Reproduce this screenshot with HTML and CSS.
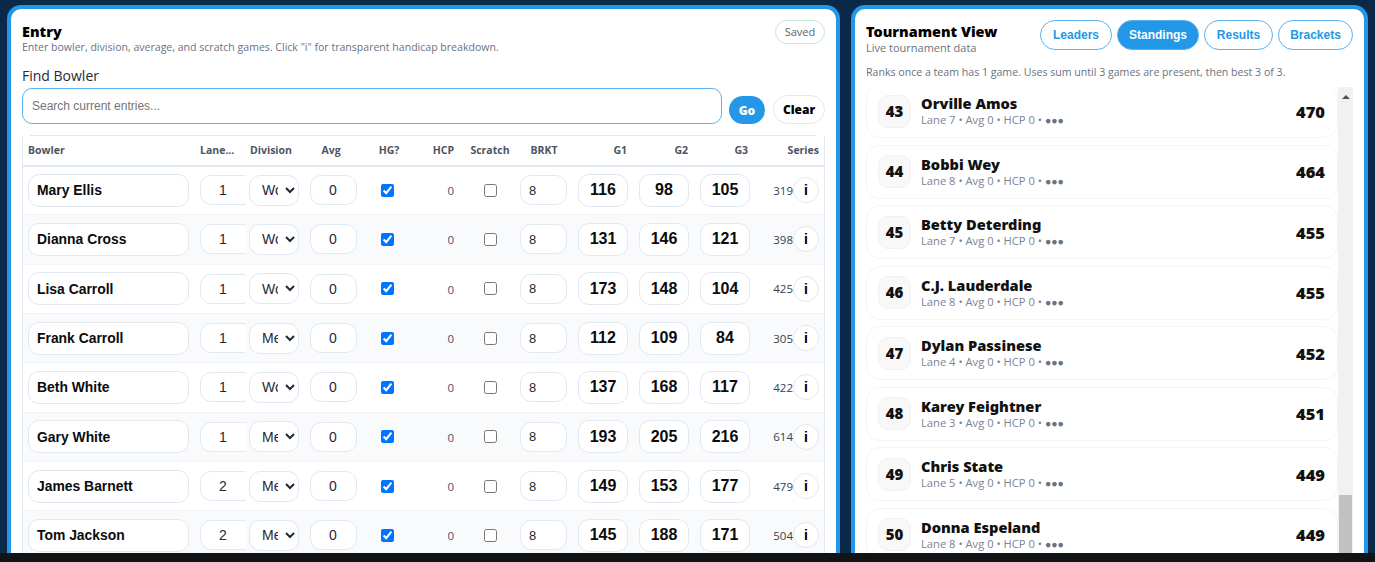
FILE: index.html
```html
<!DOCTYPE html>
<html lang="en">
<head>
<meta charset="utf-8">
<title>Tournament</title>
<link rel="stylesheet" href="styles.css">
</head>
<body>
<div class="app">
  <section class="panel entry">
    <div class="head">
      <div>
        <h2 class="title">Entry</h2>
        <p class="sub lead">Enter bowler, division, average, and scratch games. Click "i" for transparent handicap breakdown.</p>
      </div>
      <span class="saved">Saved</span>
    </div>
    <label class="find-label" for="q">Find Bowler</label>
    <div class="find">
      <input id="q" class="search" placeholder="Search current entries...">
      <button class="go">Go</button>
      <button class="clear">Clear</button>
    </div>
    <div class="rule"></div>
    <div class="table-wrap">
      <table>
        <colgroup>
          <col class="c-name"><col class="c-lane"><col class="c-div"><col class="c-avg"><col class="c-hg"><col class="c-hcp"><col class="c-scr"><col class="c-brkt"><col class="c-g"><col class="c-g"><col class="c-g3"><col class="c-ser">
        </colgroup>
        <thead>
          <tr>
            <th class="l">Bowler</th><th class="lane-h l">Lane...</th><th class="div-h l">Division</th><th class="avg-h">Avg</th><th class="hg-h">HG?</th><th class="r hcp">HCP</th><th>Scratch</th><th>BRKT</th><th class="r g-h">G1</th><th class="r g-h">G2</th><th class="r g-h">G3</th><th class="r ser-h">Series</th>
          </tr>
        </thead>
        <tbody>
          <tr>
            <td><input class="f name" value="Mary Ellis"></td>
            <td class="lane"><input class="f num" value="1"></td>
            <td class="dv"><select class="sel"><option>Women</option><option>Men</option></select></td>
            <td><input class="f num avg" value="0"></td>
            <td class="c"><input type="checkbox" class="chk" checked></td>
            <td class="r hcp val">0</td>
            <td class="c"><input type="checkbox" class="chk"></td>
            <td><input class="f brkt" value="8"></td>
            <td><input class="f game" value="116"></td>
            <td><input class="f game" value="98"></td>
            <td><input class="f game" value="105"></td>
            <td class="sc"><div class="ser"><span>319</span><button class="info">i</button></div></td>
          </tr>
          <tr>
            <td><input class="f name" value="Dianna Cross"></td>
            <td class="lane"><input class="f num" value="1"></td>
            <td class="dv"><select class="sel"><option>Women</option><option>Men</option></select></td>
            <td><input class="f num avg" value="0"></td>
            <td class="c"><input type="checkbox" class="chk" checked></td>
            <td class="r hcp val">0</td>
            <td class="c"><input type="checkbox" class="chk"></td>
            <td><input class="f brkt" value="8"></td>
            <td><input class="f game" value="131"></td>
            <td><input class="f game" value="146"></td>
            <td><input class="f game" value="121"></td>
            <td class="sc"><div class="ser"><span>398</span><button class="info">i</button></div></td>
          </tr>
          <tr>
            <td><input class="f name" value="Lisa Carroll"></td>
            <td class="lane"><input class="f num" value="1"></td>
            <td class="dv"><select class="sel"><option>Women</option><option>Men</option></select></td>
            <td><input class="f num avg" value="0"></td>
            <td class="c"><input type="checkbox" class="chk" checked></td>
            <td class="r hcp val">0</td>
            <td class="c"><input type="checkbox" class="chk"></td>
            <td><input class="f brkt" value="8"></td>
            <td><input class="f game" value="173"></td>
            <td><input class="f game" value="148"></td>
            <td><input class="f game" value="104"></td>
            <td class="sc"><div class="ser"><span>425</span><button class="info">i</button></div></td>
          </tr>
          <tr>
            <td><input class="f name" value="Frank Carroll"></td>
            <td class="lane"><input class="f num" value="1"></td>
            <td class="dv"><select class="sel"><option>Men</option><option>Women</option></select></td>
            <td><input class="f num avg" value="0"></td>
            <td class="c"><input type="checkbox" class="chk" checked></td>
            <td class="r hcp val">0</td>
            <td class="c"><input type="checkbox" class="chk"></td>
            <td><input class="f brkt" value="8"></td>
            <td><input class="f game" value="112"></td>
            <td><input class="f game" value="109"></td>
            <td><input class="f game" value="84"></td>
            <td class="sc"><div class="ser"><span>305</span><button class="info">i</button></div></td>
          </tr>
          <tr>
            <td><input class="f name" value="Beth White"></td>
            <td class="lane"><input class="f num" value="1"></td>
            <td class="dv"><select class="sel"><option>Women</option><option>Men</option></select></td>
            <td><input class="f num avg" value="0"></td>
            <td class="c"><input type="checkbox" class="chk" checked></td>
            <td class="r hcp val">0</td>
            <td class="c"><input type="checkbox" class="chk"></td>
            <td><input class="f brkt" value="8"></td>
            <td><input class="f game" value="137"></td>
            <td><input class="f game" value="168"></td>
            <td><input class="f game" value="117"></td>
            <td class="sc"><div class="ser"><span>422</span><button class="info">i</button></div></td>
          </tr>
          <tr>
            <td><input class="f name" value="Gary White"></td>
            <td class="lane"><input class="f num" value="1"></td>
            <td class="dv"><select class="sel"><option>Men</option><option>Women</option></select></td>
            <td><input class="f num avg" value="0"></td>
            <td class="c"><input type="checkbox" class="chk" checked></td>
            <td class="r hcp val">0</td>
            <td class="c"><input type="checkbox" class="chk"></td>
            <td><input class="f brkt" value="8"></td>
            <td><input class="f game" value="193"></td>
            <td><input class="f game" value="205"></td>
            <td><input class="f game" value="216"></td>
            <td class="sc"><div class="ser"><span>614</span><button class="info">i</button></div></td>
          </tr>
          <tr>
            <td><input class="f name" value="James Barnett"></td>
            <td class="lane"><input class="f num" value="2"></td>
            <td class="dv"><select class="sel"><option>Men</option><option>Women</option></select></td>
            <td><input class="f num avg" value="0"></td>
            <td class="c"><input type="checkbox" class="chk" checked></td>
            <td class="r hcp val">0</td>
            <td class="c"><input type="checkbox" class="chk"></td>
            <td><input class="f brkt" value="8"></td>
            <td><input class="f game" value="149"></td>
            <td><input class="f game" value="153"></td>
            <td><input class="f game" value="177"></td>
            <td class="sc"><div class="ser"><span>479</span><button class="info">i</button></div></td>
          </tr>
          <tr>
            <td><input class="f name" value="Tom Jackson"></td>
            <td class="lane"><input class="f num" value="2"></td>
            <td class="dv"><select class="sel"><option>Men</option><option>Women</option></select></td>
            <td><input class="f num avg" value="0"></td>
            <td class="c"><input type="checkbox" class="chk" checked></td>
            <td class="r hcp val">0</td>
            <td class="c"><input type="checkbox" class="chk"></td>
            <td><input class="f brkt" value="8"></td>
            <td><input class="f game" value="145"></td>
            <td><input class="f game" value="188"></td>
            <td><input class="f game" value="171"></td>
            <td class="sc"><div class="ser"><span>504</span><button class="info">i</button></div></td>
          </tr>
        </tbody>
      </table>
    </div>
  </section>

  <section class="panel view">
    <div class="view-head">
      <div>
        <h2 class="title">Tournament View</h2>
        <p class="sub">Live tournament data</p>
      </div>
      <nav class="tabs">
        <button class="tab">Leaders</button>
        <button class="tab on">Standings</button>
        <button class="tab">Results</button>
        <button class="tab">Brackets</button>
      </nav>
    </div>
    <p class="note">Ranks once a team has 1 game. Uses sum until 3 games are present, then best 3 of 3.</p>
    <div class="board">
      <ul class="list">
        <li class="item"><span class="rank">43</span><div class="who"><div class="nm">Orville Amos</div><div class="meta">Lane 7 • Avg 0 • HCP 0 • <b>●●●</b></div></div><span class="score">470</span></li>
        <li class="item"><span class="rank">44</span><div class="who"><div class="nm">Bobbi Wey</div><div class="meta">Lane 8 • Avg 0 • HCP 0 • <b>●●●</b></div></div><span class="score">464</span></li>
        <li class="item"><span class="rank">45</span><div class="who"><div class="nm">Betty Deterding</div><div class="meta">Lane 7 • Avg 0 • HCP 0 • <b>●●●</b></div></div><span class="score">455</span></li>
        <li class="item"><span class="rank">46</span><div class="who"><div class="nm">C.J. Lauderdale</div><div class="meta">Lane 8 • Avg 0 • HCP 0 • <b>●●●</b></div></div><span class="score">455</span></li>
        <li class="item"><span class="rank">47</span><div class="who"><div class="nm">Dylan Passinese</div><div class="meta">Lane 4 • Avg 0 • HCP 0 • <b>●●●</b></div></div><span class="score">452</span></li>
        <li class="item"><span class="rank">48</span><div class="who"><div class="nm">Karey Feightner</div><div class="meta">Lane 3 • Avg 0 • HCP 0 • <b>●●●</b></div></div><span class="score">451</span></li>
        <li class="item"><span class="rank">49</span><div class="who"><div class="nm">Chris State</div><div class="meta">Lane 5 • Avg 0 • HCP 0 • <b>●●●</b></div></div><span class="score">449</span></li>
        <li class="item"><span class="rank">50</span><div class="who"><div class="nm">Donna Espeland</div><div class="meta">Lane 8 • Avg 0 • HCP 0 • <b>●●●</b></div></div><span class="score">449</span></li>
      </ul>
      <div class="scroll"><span class="arrow"></span><span class="thumb"></span></div>
    </div>
  </section>
</div>
<div class="strip"></div>
</body>
</html>
```

FILE: styles.css
```css
* { box-sizing: border-box; }
html, body { margin: 0; height: 562px; overflow: hidden; }
body { background: #0b2a4a; font-family: "Open Sans", "Noto Sans", sans-serif; color: #0f172a; }
.app { display: flex; gap: 11px; height: 553px; padding: 5px 7px 0 7px; overflow: hidden; }
.strip { height: 9px; background: #121314; }
.panel { background: #fff; border: 4px solid #2398e8; border-bottom: 0; border-radius: 14px 14px 0 0; padding: 11px; overflow: hidden; }
.entry { flex: 0 0 833px; }
.view { flex: 0 0 517px; padding: 11px 11px 0 11px; }

.head { display: flex; justify-content: space-between; align-items: flex-start; height: 37px; }
.title { margin: 0; font: 900 14.4px/17px "Noto Sans", sans-serif; color: #000; padding-top: 3px; }
.sub { margin: 0; font-size: 11px; line-height: 15px; color: #6b7280; }
.sub.lead { font-size: 10.55px; }
.saved { width: 50px; height: 24px; border: 1px solid #c7ead6; border-radius: 12px; font-size: 11px; line-height: 22px; text-align: center; color: #5b6472; }
.find-label { display: block; margin-top: 9px; font-size: 14px; line-height: 19px; color: #1f2937; }
.find { display: flex; align-items: flex-end; margin-top: 3px; }
.search { width: 700px; height: 36px; padding: 0 9px; border: 1px solid #5cb0ee; border-radius: 10px; font: 12px "Liberation Sans", sans-serif; outline: 0; }
.search::placeholder { color: #757575; }
.go { margin-left: 7px; width: 36px; height: 28px; border: 0; border-radius: 14px; background: #2398e8; color: #fff; font: 800 12px "Open Sans", sans-serif; padding: 0; }
.clear { margin-left: 8px; width: 52px; height: 29px; border: 1px solid #e5e7eb; border-radius: 15px; background: #fff; color: #000; font: 800 12px "Open Sans", sans-serif; padding: 0; }

.rule { height: 1px; margin: 11px 9px 0 8px; background: #e2e8f0; }
.table-wrap { width: 803px; border: 1px solid #e2e8f0; border-width: 0 1px; overflow: hidden; }
table { width: 801px; border-collapse: collapse; table-layout: fixed; }
.c-name { width: 171px; } .c-lane { width: 52px; } .c-div { width: 58px; } .c-avg { width: 58px; }
.c-hg { width: 50px; } .c-hcp { width: 53px; } .c-scr { width: 50px; } .c-brkt { width: 58px; }
.c-g { width: 61px; } .c-g3 { width: 60px; } .c-ser { width: 69px; }
th { height: 29.5px; padding: 0 5px; border-bottom: 2px solid #e2e8f0; font-size: 10.5px; font-weight: 700; color: #4b5563; text-align: center; white-space: nowrap; overflow: hidden; }
th.l { text-align: left; }
th.r { text-align: right; }
th.lane-h { padding: 0 0 0 6px; }
th.div-h { padding: 0 0 0 4px; }
th.avg-h { padding-right: 9px; }
th.hg-h { padding-left: 9px; }
th.g-h { padding-right: 7px; }
th.ser-h { padding-right: 5px; }
th.hcp, td.hcp { padding-right: 11px; }
td { height: 49.33px; padding: 0 5px; border-bottom: 1px solid #f1f5f9; }
tbody tr:nth-child(even) td { background: #f8fafc; }
td.c { text-align: center; }
td.r { text-align: right; }
td.val { font-size: 11.5px; color: #4b5563; padding-top: 1px; }
td.lane { padding: 0 0 0 6px; overflow: hidden; }
td.dv { padding: 0 5px 0 3px; }
td.sc { padding-right: 5px; }

.f { display: block; height: 30px; width: 100%; border: 1px solid #e2e8f0; border-radius: 11px; background: #fff; font: 14px "Liberation Sans", sans-serif; color: #1f2937; outline: 0; padding: 0 8px; }
.name { height: 33px; font-weight: 700; font-size: 13.9px; color: #0b0b0b; }
.num { text-align: center; }
.lane .num { width: 54px; padding-right: 16px; }
.avg { width: 47px; margin: 0 auto; }
.brkt { width: 47px; font-size: 13px; }
.game { width: 50px; height: 33px; font-size: 16px; font-weight: 700; text-align: center; color: #0b0b0b; }
.sel { display: block; width: 50px; height: 31px; border: 1px solid #e2e8f0; border-radius: 11px; background-color: #fff; font: 14px "Liberation Sans", sans-serif; color: #1f2937; padding: 0 4px 0 8px; outline: 0; }
.chk { display: block; width: 13px; height: 13px; margin: 0 auto; }
.ser { display: flex; align-items: center; justify-content: flex-end; font-size: 11.5px; color: #374151; }
.info { width: 26px; height: 26px; flex: none; padding: 0; border: 1px solid #e5e7eb; border-radius: 50%; background: #fff; color: #000; font: 700 14px "Liberation Sans", sans-serif; }

.view-head { display: flex; justify-content: space-between; height: 35px; }
.tabs { display: grid; grid-template-columns: 72px 82px 69px 75px; grid-template-rows: 30px; gap: 5px; }
.tab { padding: 0; border: 1px solid #5cb0ee; border-radius: 15px; background: #fff; color: #2398e8; font: 700 12px "Liberation Sans", sans-serif; }
.tab.on { background: #2398e8; color: #fff; }
.note { margin: 10px 0 0; font-size: 10.6px; line-height: 15px; color: #6b7280; }
.board { display: flex; margin-top: 7px; height: 470px; overflow: hidden; }
.list { flex: 0 0 472px; margin: 0; padding: 0; list-style: none; overflow: hidden; }
.item { display: flex; align-items: center; height: 54px; margin-bottom: 6.5px; padding: 0 12px 0 11px; border: 1px solid #f1f5f9; border-radius: 14px; }
.item:first-child { margin-top: -3px; }
.rank { flex: none; width: 33px; height: 33px; border: 1px solid #f1f1f1; border-radius: 10px; background: #f8f8f8; font: 800 15px/30px "Open Sans", sans-serif; text-align: center; color: #111; }
.who { flex: 1; margin-left: 10px; }
.nm { font: 900 14.6px/17px "Noto Sans", sans-serif; color: #111; }
.meta { margin-top: 1px; font-size: 11.2px; line-height: 14px; color: #7b8494; }
.meta b { color: #6b7280; font-size: 10.5px; letter-spacing: 0; }
.score { font: 800 16.5px "Open Sans", sans-serif; color: #111; }
.scroll { flex: 0 0 15px; background: #f1f1f1; display: flex; flex-direction: column; align-items: center; }
.arrow { margin-top: 8px; width: 0; height: 0; border: 4px solid transparent; border-top: 0; border-bottom: 4px solid #505050; }
.thumb { margin-top: 396px; width: 13px; height: 60px; background: #c1c1c1; flex: none; }
```
